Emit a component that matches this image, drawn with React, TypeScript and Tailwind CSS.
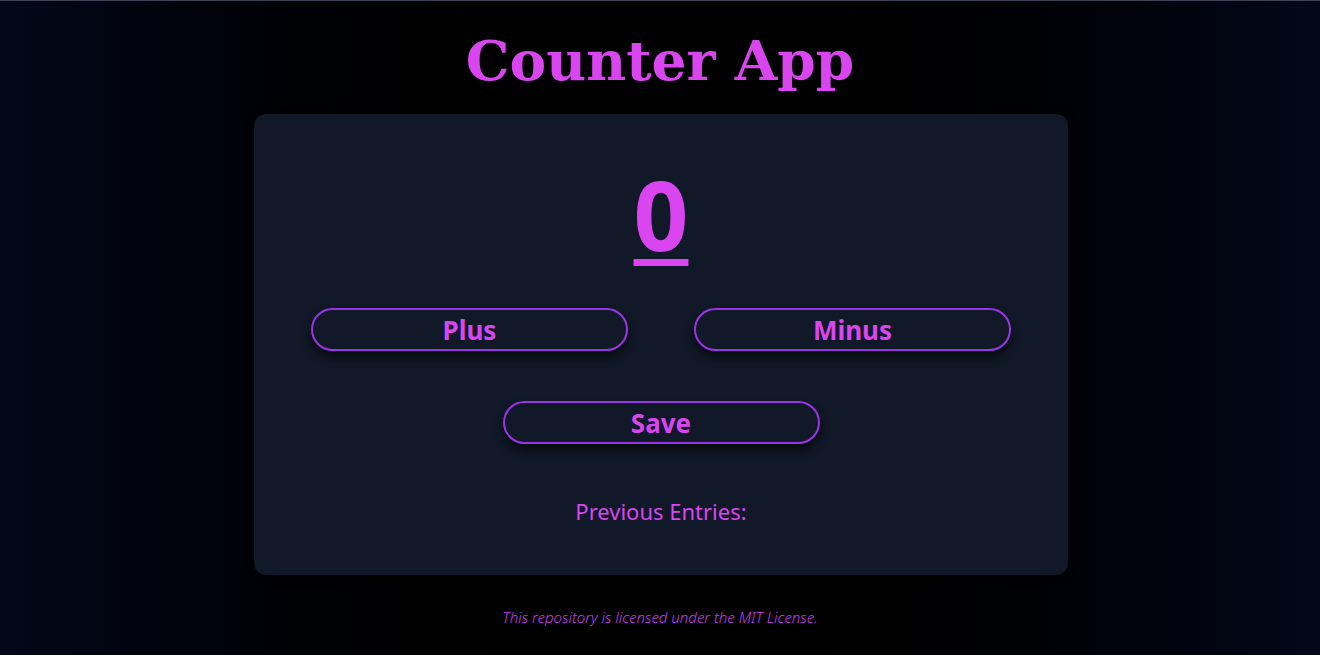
import React, { useState } from "react";

const sans = "font-['Noto_Sans','Open_Sans',sans-serif]";

const App = () => {
  const [count, setCount] = useState(0);
  const [entries, setEntries] = useState<number[]>([]);

  const btn =
    "w-[317px] h-[43px] rounded-full border-2 border-[#9a35e6] bg-[#111827] text-[#d946ef] text-[26px] font-bold leading-none shadow-[0_6px_10px_rgba(0,0,0,0.6)] flex items-center justify-center " +
    sans;

  return (
    <div className="min-h-screen w-full border-t border-[#3d4354] bg-linear-to-r from-[#030819] via-black to-[#030819] flex flex-col items-center">
      <h1 className="mt-[32px] text-[55px] leading-none font-bold text-[#d946ef] font-['DejaVu_Serif',serif]">
        Counter App
      </h1>

      <div className="mt-[26px] ml-[2px] w-[814px] rounded-xl bg-[#111827] shadow-[0_0_6px_rgba(0,0,0,0.8)] flex flex-col items-center pt-[52px] pb-[50px]">
        <div
          className={
            "text-[96px] leading-none font-bold text-[#d946ef] underline decoration-[7px] underline-offset-[8px] " +
            sans
          }
        >
          {count}
        </div>

        <div className="mt-[46px] flex gap-[66px]">
          <button className={btn} onClick={() => setCount(count + 1)}>
            Plus
          </button>
          <button className={btn} onClick={() => setCount(count - 1)}>
            Minus
          </button>
        </div>

        <button
          className={btn + " mt-[50px]"}
          onClick={() => setEntries([...entries, count])}
        >
          Save
        </button>

        <p className={"mt-[53px] text-[22px] leading-7 text-[#d946ef] " + sans}>
          Previous Entries: {entries.join(", ")}
        </p>
      </div>

      <p
        className={
          "mt-[32px] text-[15px] leading-5 italic font-light text-[#c93ef0] " +
          sans
        }
      >
        This repository is licensed under the MIT License.
      </p>
    </div>
  );
};

export default App;
